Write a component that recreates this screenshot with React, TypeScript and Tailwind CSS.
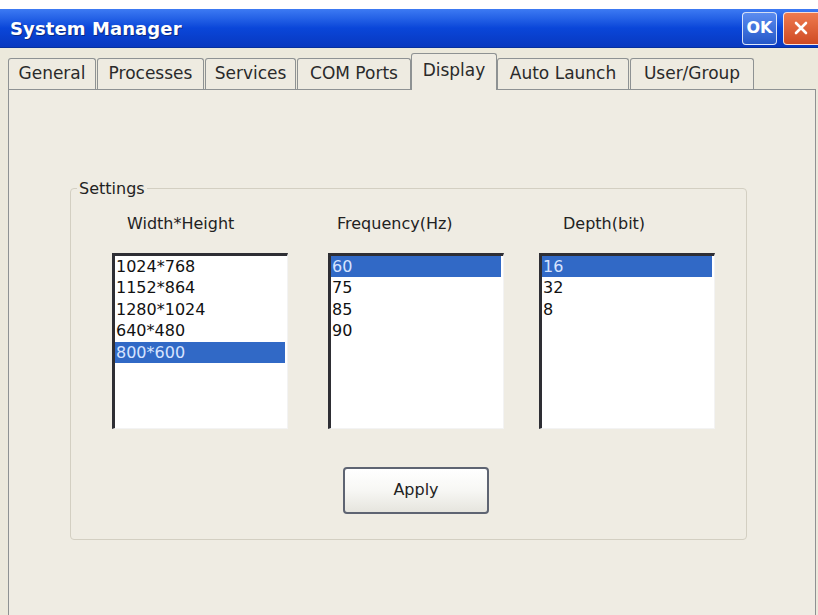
import React from "react"

const tabs = [
  { label: "General", cls: "w-[88px]" },
  { label: "Processes", cls: "w-[107px] ml-[1px]" },
  { label: "Services", cls: "w-[91px] ml-[1px]" },
  { label: "COM Ports", cls: "w-[114px] ml-[1px]" },
  { label: "Display", cls: "w-[86px]", active: true },
  { label: "Auto Launch", cls: "w-[132px]" },
  { label: "User/Group", cls: "w-[124px] ml-[1px]" },
]

function ListBox({ items, selected }: { items: string[]; selected: number }) {
  return (
    <div className="w-[176px] h-[176px] bg-white border-t-[3px] border-l-[3px] border-[#2e2e34] border-r border-r-[#f3f3f3] border-b border-b-[#f3f3f3] overflow-hidden">
      {items.map((item, i) => (
        <div
          key={item}
          className={
            i === selected
              ? "h-[21.5px] leading-[21.5px] pl-[1px] bg-[#3169c6] text-[#d7e4ff] mr-[2px]"
              : "h-[21.5px] leading-[21.5px] pl-[1px] text-[#111]"
          }
        >
          {item}
        </div>
      ))}
    </div>
  )
}

export default function App() {
  return (
    <div className="w-[818px] h-[615px] overflow-hidden bg-white flex flex-col font-['DejaVu_Sans',sans-serif]">
      <div className="h-[9px] bg-white" />

      {/* title bar */}
      <div className="h-[39px] flex items-center justify-between pl-[10px] bg-gradient-to-b from-[#3d7af3] via-[#0a46d9] to-[#0838c0] border-b border-[#06309e]">
        <span className="text-[18px] font-bold text-white tracking-[0.1px] [text-shadow:1px_1px_0_#0a2a80]">
          System Manager
        </span>
        <div className="flex items-center gap-[6px]">
          <div className="w-[35px] h-[33px] rounded-[4px] border border-white/80 bg-gradient-to-b from-[#5b8cf0] to-[#2457c8] flex items-center justify-center text-white font-bold text-[16px]">
            OK
          </div>
          <div className="w-[35px] h-[33px] rounded-l-[4px] border border-r-0 border-white/80 bg-gradient-to-b from-[#ee7a4f] to-[#cf4a22] flex items-center justify-center">
            <svg width="16" height="16" viewBox="0 0 16 16">
              <path d="M3 3 L13 13 M13 3 L3 13" stroke="white" strokeWidth="2.6" strokeLinecap="round" />
            </svg>
          </div>
        </div>
      </div>

      <div className="flex-1 flex flex-col bg-[#ece9dc]">
        {/* tabs */}
        <div className="h-[41px] flex items-end pl-[8px]">
          {tabs.map((t) =>
            t.active ? (
              <div
                key={t.label}
                className={`${t.cls} relative z-10 -mb-[1px] h-[37px] flex items-center justify-center pb-[3px] bg-[#efece3] border border-b-0 border-[#8e9293] rounded-t-[3px] text-[17px] text-[#2a2a2a]`}
              >
                {t.label}
              </div>
            ) : (
              <div
                key={t.label}
                className={`${t.cls} h-[31px] flex items-center justify-center bg-[#eeebe1] border border-b-0 border-[#8e9293] rounded-t-[3px] text-[17px] text-[#2a2a2a]`}
              >
                {t.label}
              </div>
            )
          )}
        </div>

        {/* tab panel */}
        <div className="flex-1 ml-[8px] mr-[2px] border-t border-l border-r border-[#8e9293] bg-[#efece3]">
          <fieldset className="mt-[89px] ml-[61px] w-[677px] h-[361px] border border-[#d3cfc2] rounded-[4px]">
            <legend className="ml-[6px] px-[2px] text-[16px] leading-[19px] text-[#222]">Settings</legend>

            <div className="flex mt-[16px]">
              <div className="ml-[41px] w-[176px]">
                <div className="pl-[15px] text-[16px] leading-[19px] text-[#222]">Width*Height</div>
              </div>
              <div className="ml-[40px] w-[176px]">
                <div className="pl-[9px] text-[16px] leading-[19px] text-[#222]">Frequency(Hz)</div>
              </div>
              <div className="ml-[35px] w-[176px]">
                <div className="pl-[24px] text-[16px] leading-[19px] text-[#222]">Depth(bit)</div>
              </div>
            </div>

            <div className="flex mt-[19.5px] text-[16px]">
              <div className="ml-[41px]">
                <ListBox items={["1024*768", "1152*864", "1280*1024", "640*480", "800*600"]} selected={4} />
              </div>
              <div className="ml-[40px]">
                <ListBox items={["60", "75", "85", "90"]} selected={0} />
              </div>
              <div className="ml-[35px]">
                <ListBox items={["16", "32", "8"]} selected={0} />
              </div>
            </div>

            <button className="mt-[38px] ml-[272px] w-[146px] h-[47px] rounded-[4px] border-2 border-[#5e6472] bg-gradient-to-b from-white via-[#f7f7f4] to-[#e6e5de] text-[16px] text-[#222]">
              Apply
            </button>
          </fieldset>
        </div>
      </div>
    </div>
  )
}
